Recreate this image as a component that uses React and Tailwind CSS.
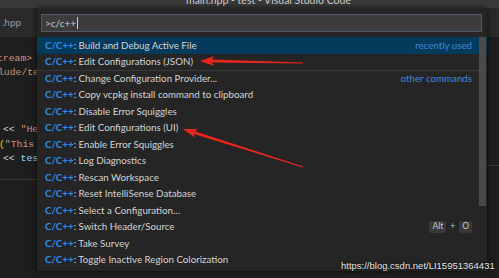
import React from "react";

const rows = [
  { t: "Build and Debug Active File", d: "recently used", sel: true },
  { t: "Edit Configurations (JSON)" },
  { t: "Change Configuration Provider...", d: "other commands", sep: true },
  { t: "Copy vcpkg install command to clipboard" },
  { t: "Disable Error Squiggles" },
  { t: "Edit Configurations (UI)" },
  { t: "Enable Error Squiggles" },
  { t: "Log Diagnostics" },
  { t: "Rescan Workspace" },
  { t: "Reset IntelliSense Database" },
  { t: "Select a Configuration..." },
  { t: "Switch Header/Source", kb: true },
  { t: "Take Survey" },
  { t: "Toggle Inactive Region Colorization" },
];

export default function App() {
  const ui = { fontFamily: "Lato, 'Liberation Sans', sans-serif" };
  const mono = { fontFamily: "'Liberation Mono', monospace" };
  return (
    <div className="relative w-[499px] h-[278px] overflow-hidden bg-[#1e1e1e]" style={ui}>
      {/* title bar */}
      <div className="h-[8px] bg-[#3a3a3a] overflow-hidden pl-[186px]">
        <div className="text-[10.5px] leading-[10px] -mt-[5px] text-[#cccccc] whitespace-nowrap">
          main.hpp - test - Visual Studio Code
        </div>
      </div>
      {/* tab bar */}
      <div className="h-[29px] bg-[#2a2a2a] flex items-center">
        <div className="pl-[2px] text-[10px] text-[#9a9a9a]">.hpp</div>
      </div>
      {/* editor */}
      <div className="pt-[15px] text-[9.75px] leading-[14.25px] whitespace-pre" style={mono}>
        <div className="-ml-[3px] text-[#ce9178]">tream&gt;</div>
        <div className="-ml-[2px] text-[#ce9178]">lude/te</div>
        <div>&nbsp;</div>
        <div>&nbsp;</div>
        <div>&nbsp;</div>
        <div className="pl-[3px] text-[#d4d4d4]">
          &lt;&lt; <span className="text-[#ce9178]">"He</span>
        </div>
        <div className="-ml-[1px]">
          <span className="text-[#ffd700]">(</span>
          <span className="text-[#ce9178]">"This</span>
        </div>
        <div className="pl-[3px] text-[#d4d4d4]">
          &lt;&lt; <span className="text-[#9cdcfe]">tes</span>
        </div>
      </div>
      <div className="absolute left-0 top-[179px] w-[40px] h-px bg-[#383838]" />
      <div className="absolute right-0 top-[165px] w-[14px] h-px bg-[#383838]" />

      {/* quick input widget */}
      <div className="absolute left-[37px] top-[8px] w-[450px] h-[263px] bg-[#252526] shadow-[0_0_6px_rgba(0,0,0,0.7)] pt-[6px]">
        <div className="ml-[4px] mr-[5px] h-[18px] bg-[#3c3c3c] border border-[#4e5c6c] flex items-center pl-[3px]">
          <span className="text-[10px] text-[#cccccc]">&gt;c/c++</span>
          <span className="w-px h-[12px] bg-[#cccccc] ml-px" />
        </div>
        <div className="mt-[5px]">
          {rows.map((r, i) => (
            <div
              key={i}
              className={`h-[16.5px] flex items-center justify-between pl-[8px] pr-[15px] text-[9.75px] whitespace-nowrap ${
                r.sel ? "bg-[#063a5c]" : ""
              } ${r.sep ? "border-t border-[#3a3a3a]" : ""}`}
            >
              <span className="text-[#d4d4d4]">
                <span className="font-bold text-[#2f8fe6]">C/C++</span>: {r.t}
              </span>
              {r.d && <span className="text-[#3d8ad8]">{r.d}</span>}
              {r.kb && (
                <span className="flex items-center gap-[4px] text-[8.5px] text-[#c8c8c8]">
                  <span className="h-[12px] px-[3px] bg-[#383838] rounded-[2px] flex items-center">Alt</span>
                  <span>+</span>
                  <span className="h-[12px] px-[3px] bg-[#383838] rounded-[2px] flex items-center">O</span>
                </span>
              )}
            </div>
          ))}
        </div>
        <div className="absolute left-[442px] top-[29px] w-[7px] h-[169px] bg-[#4a4a4a]" />
      </div>

      {/* red arrows */}
      <svg className="absolute left-0 top-0" width="499" height="278">
        <polygon
          fill="#e8261e"
          points="200,61 214,56 212,59.5 303,62.5 303,63.5 212,62.5 214,66"
        />
        <polygon
          fill="#e8261e"
          points="183,129 197.7,128.9 194.9,131.2 303.15,166.5 302.85,167.5 193.9,134 194.9,137.5"
        />
      </svg>

      {/* watermark */}
      <div
        className="absolute left-[341px] top-[260px] text-[9.5px] leading-[12px] text-[#e6e6e6] whitespace-nowrap [text-shadow:0_0_2px_#000]"
        style={{ fontFamily: "'Liberation Sans', Arial, sans-serif" }}
      >
        https://blog.csdn.net/LI15951364431
      </div>
    </div>
  );
}
